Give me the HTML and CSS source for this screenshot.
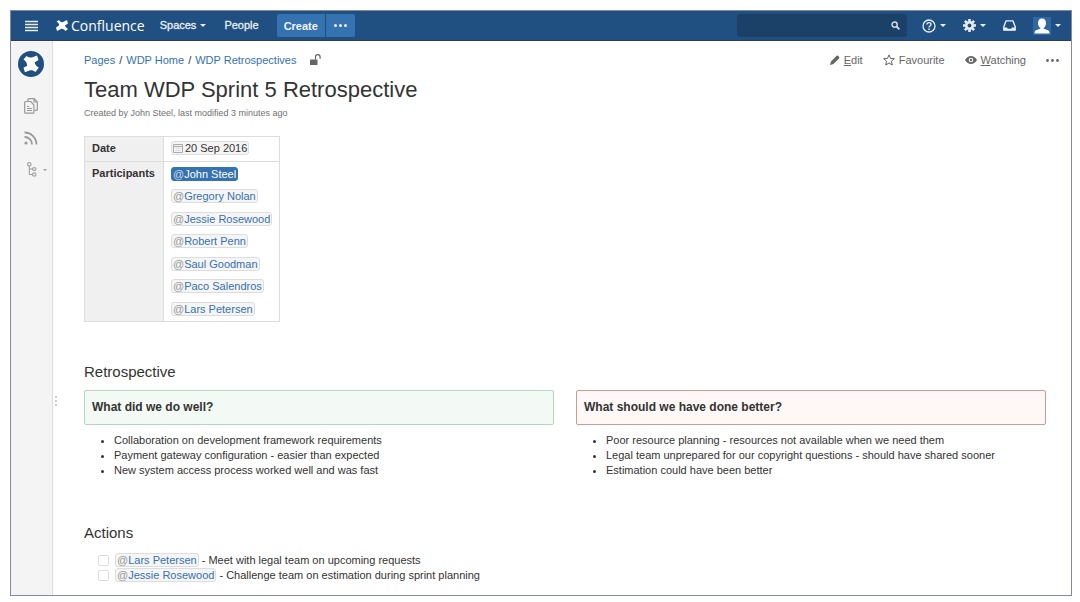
FILE: index.html
```html
<!DOCTYPE html>
<html lang="en">
<head>
    <meta charset="UTF-8">
    <meta name="viewport" content="width=device-width, initial-scale=1.0">
    <title>Team WDP Sprint 5 Retrospective - Confluence</title>

    <link rel="stylesheet" href="styles.css">
</head>
<body>
    <div class="app">
        <!-- top bar -->
        <header class="header">
            <button type="button" class="icon-btn menu-btn" aria-label="Menu">
                <svg width="13" height="12" viewBox="0 0 13 12"><path d="M0 1.5h13M0 4.5h13M0 7.5h13M0 10.5h13" stroke="currentColor" stroke-width="1.3"/></svg>
            </button>
            <a href="#" class="logo">
                <svg width="12" height="11" viewBox="0 0 24 22" fill="currentColor"><path d="M1 3 6 0c3 4 5 5 8 4l8-4 2 7-6 4c1 3 2 4 6 7l-5 4c-4-4-6-5-9-4l-8 4-2-7 6-4C7 8 5 6 1 3z"/></svg>
                <span>Confluence</span>
            </a>
            <nav class="main-nav">
                <a href="#">Spaces <span class="caret"></span></a>
                <a href="#">People</a>
            </nav>
            <div class="create-group">
                <button type="button" class="create-btn">Create</button>
                <button type="button" class="create-btn more-btn" aria-label="Create from template">
                    <svg width="13" height="3" viewBox="0 0 13 3" fill="currentColor"><circle cx="1.5" cy="1.5" r="1.5"/><circle cx="6.5" cy="1.5" r="1.5"/><circle cx="11.5" cy="1.5" r="1.5"/></svg>
                </button>
            </div>
            <form class="search" role="search">
                <input type="text" class="search-input" aria-label="Search">
                <svg width="9" height="9" viewBox="0 0 9 9" fill="none" stroke="currentColor" stroke-width="1.4"><circle cx="3.6" cy="3.6" r="2.6"/><path d="M5.6 5.6 8.4 8.4" stroke-width="1.8"/></svg>
            </form>
            <div class="tools">
                <button type="button" class="icon-btn" aria-label="Help">
                    <svg width="14" height="14" viewBox="0 0 14 14" fill="none" stroke="currentColor"><circle cx="7" cy="7" r="6" stroke-width="1.3"/><path d="M5 5.6c0-2.6 4-2.6 4-.2C9 7 7 6.9 7 8.6" stroke-width="1.4"/><path d="M7 9.6v1.5" stroke-width="1.5"/></svg>
                    <span class="caret"></span>
                </button>
                <button type="button" class="icon-btn" aria-label="Settings">
                    <svg width="13" height="13" viewBox="0 0 13 13" fill="none" stroke="currentColor"><circle cx="6.5" cy="6.5" r="3.3" stroke-width="2.6"/><path d="M6.5 0v2.4M6.5 10.6V13M0 6.5h2.4M10.6 6.5H13M1.9 1.9l1.7 1.7M9.4 9.4l1.7 1.7M11.1 1.9 9.4 3.6M3.6 9.4l-1.7 1.7" stroke-width="2.6"/></svg>
                    <span class="caret"></span>
                </button>
                <button type="button" class="icon-btn" aria-label="Notifications">
                    <svg width="13" height="11" viewBox="0 0 13 11" fill="none" stroke="currentColor" stroke-width="1.4"><path d="M3 .9h7l2.2 5.8v3.4H.8V6.7z" stroke-linejoin="round"/><path d="M.8 7.4h3.1l.9 1.4h3.4l.9-1.4h3.1v2.9H.8z" fill="currentColor" stroke="none"/></svg>
                </button>
                <button type="button" class="icon-btn" aria-label="Profile">
                    <svg width="18" height="18" viewBox="0 0 18 18"><path fill="#2f68a2" d="M0 0h18v18H0z"/><path fill="#fff" d="M9 1.5c2.7 0 4 1.9 4 4.4 0 2.2-.9 4.2-2.3 5.1v.8l4.3 1.4c1.2.4 1.5 1.6 1.5 3.3h-15c0-1.7.3-2.9 1.500-3.300l4.300-1.400V11C5.900 10.100 5 8.100 5 5.900 5 3.400 6.300 1.500 9 1.500z"/></svg>
                    <span class="caret"></span>
                </button>
            </div>
        </header>

        <div class="body">
            <!-- sidebar -->
            <aside class="sidebar">
                <a href="#" class="space-logo" aria-label="Space home">
                    <svg width="26" height="26" viewBox="0 0 26 26"><circle cx="13" cy="13" r="13" fill="#205081"/><path fill="#fff" d="M5.500 8.500l3-3.500c2 1.500 4 2 6 1.200L19 4.500l1.500 4.500-3.700 2.200c.2 2.400 1.300 3.800 4 5.300L17.500 21c-2-1.700-4.200-2.300-6-1.500l-4.600 1.800-1.400-4.500 3.700-2.100C9 12 8 10.200 5.500 8.500z"/></svg>
                </a>
                <a href="#" class="side-link" aria-label="Pages">
                    <svg width="14" height="16" viewBox="0 0 14 16" fill="none" stroke="currentColor" stroke-width="1.2"><path d="M4 3V1.500c0-.5.3-.8.8-.8h5.400L13.300 4v7.500c0 .6-.3.9-.8.9H10.500M10 .7V4h3.300"/><path d="M1.500 3.500h5.300L9.900 7v7.300c0 .6-.3.9-.8.9H1.500c-.5 0-.8-.3-.8-.9V4.400c0-.6.3-.9.8-.9z"/><path d="M3 8.500h2M3 10.500h5M3 12.500h5"/></svg>
                </a>
                <a href="#" class="side-link" aria-label="Blog">
                    <svg width="14" height="14" viewBox="0 0 14 14" fill="none" stroke="currentColor" stroke-width="1.8"><circle cx="2" cy="12" r="1.6" fill="currentColor" stroke="none"/><path d="M.5 6A7.300 7.300 0 0 1 8 13.500M.5 1.500A12 12 0 0 1 12.500 13.500"/></svg>
                </a>
                <a href="#" class="side-link tree-link" aria-label="Page tree">
                    <svg width="10" height="15" viewBox="0 0 10 15" fill="none" stroke="currentColor"><path d="M.8.8h3v3h-3zM5.800 5.800h3v2.500h-3zM5.800 11h3v3h-3zM2.300 3.800v8.700h3.500M2.300 7h3.500"/></svg>
                    <span class="caret"></span>
                </a>
            </aside>
            <div class="resize-handle"><i></i><i></i><i></i></div>

            <!-- page -->
            <main class="content">
                <div class="page-top">
                    <nav class="breadcrumbs">
                        <a href="#">Pages</a><span class="sep">/</span><a href="#">WDP Home</a><span class="sep">/</span><a href="#">WDP Retrospectives</a>
                        <svg class="lock" width="11" height="12" viewBox="0 0 11 12"><path fill="#666" d="M0 5.500h7.500V11H0z"/><path fill="none" stroke="#666" stroke-width="1.2" d="M5.500 5.500V3.200c0-3.400 4.600-3.400 4.600 0v1.600"/></svg>
                    </nav>
                    <div class="actions">
                        <a href="#">
                            <svg width="10" height="10" viewBox="0 0 10 10" fill="currentColor"><path d="M0 10l1-3.500L6.700.8c.9-.9 3.400 1.600 2.500 2.500L3.500 9z"/></svg>
                            <span><u>E</u>dit</span>
                        </a>
                        <a href="#">
                            <svg width="12" height="12" viewBox="0 0 12 12" fill="none" stroke="currentColor"><path d="M6 .9l1.500 3.500 3.900.3-3 2.500.9 3.800L6 9l-3.300 2 .9-3.800-3-2.500 3.900-.3z"/></svg>
                            <span>Favourite</span>
                        </a>
                        <a href="#">
                            <svg width="12" height="8" viewBox="0 0 12 8"><path fill="currentColor" fill-rule="evenodd" d="M0 4c3-5.300 9-5.300 12 0-3 5.300-9 5.300-12 0zm6-2.300a2.300 2.300 0 1 0 0 4.600 2.300 2.300 0 0 0 0-4.600z"/><circle cx="6" cy="4" r="1.2" fill="currentColor"/></svg>
                            <span><u>W</u>atching</span>
                        </a>
                        <button type="button" class="icon-btn" aria-label="More actions">
                            <svg width="13" height="3" viewBox="0 0 13 3" fill="currentColor"><circle cx="1.5" cy="1.5" r="1.4"/><circle cx="6.5" cy="1.5" r="1.4"/><circle cx="11.5" cy="1.5" r="1.4"/></svg>
                        </button>
                    </div>
                </div>

                <h1>Team WDP Sprint 5 Retrospective</h1>
                <p class="meta">Created by John Steel, last modified 3 minutes ago</p>

                <table class="info">
                    <tr>
                        <th scope="row">Date</th>
                        <td>
                            <time class="tag date" datetime="2016-09-20"><svg width="10" height="9" viewBox="0 0 10 9" fill="none" stroke="#aaa"><path d="M.5.5h9v8h-9zM.5 2.500h9"/><path d="M2.500 4.500h5M2.500 6.500h5" stroke="#ddd"/></svg>20 Sep 2016</time>
                        </td>
                    </tr>
                    <tr>
                        <th scope="row">Participants</th>
                        <td>
                            <div class="people">
                                <a href="#" class="tag me"><span class="at">@</span>John Steel</a>
                                <a href="#" class="tag"><span class="at">@</span>Gregory Nolan</a>
                                <a href="#" class="tag"><span class="at">@</span>Jessie Rosewood</a>
                                <a href="#" class="tag"><span class="at">@</span>Robert Penn</a>
                                <a href="#" class="tag"><span class="at">@</span>Saul Goodman</a>
                                <a href="#" class="tag"><span class="at">@</span>Paco Salendros</a>
                                <a href="#" class="tag"><span class="at">@</span>Lars Petersen</a>
                            </div>
                        </td>
                    </tr>
                </table>

                <h2>Retrospective</h2>
                <div class="columns">
                    <section>
                        <h3 class="panel good">What did we do well?</h3>
                        <ul>
                            <li>Collaboration on development framework requirements</li>
                            <li>Payment gateway configuration - easier than expected</li>
                            <li>New system access process worked well and was fast</li>
                        </ul>
                    </section>
                    <section>
                        <h3 class="panel bad">What should we have done better?</h3>
                        <ul>
                            <li>Poor resource planning - resources not available when we need them</li>
                            <li>Legal team unprepared for our copyright questions - should have shared sooner</li>
                            <li>Estimation could have been better</li>
                        </ul>
                    </section>
                </div>

                <h2>Actions</h2>
                <div class="tasks">
                    <div class="task">
                        <input type="checkbox" id="task1">
                        <label for="task1"><a href="#" class="tag"><span class="at">@</span>Lars Petersen</a> - Meet with legal team on upcoming requests</label>
                    </div>
                    <div class="task">
                        <input type="checkbox" id="task2">
                        <label for="task2"><a href="#" class="tag"><span class="at">@</span>Jessie Rosewood</a> - Challenge team on estimation during sprint planning</label>
                    </div>
                </div>
            </main>
        </div>
    </div>
</body>
</html>
```
FILE: styles.css
```css
* {
    box-sizing: border-box;
}

body {
    margin: 0;
    padding: 10px 8px 6px 10px;
    background: #fff;
    color: #333;
    font-family: "Liberation Sans", Arial, sans-serif;
    font-size: 11px;
    line-height: 15px;
}

a {
    color: #3572b0;
    text-decoration: none;
}

svg {
    display: block;
    flex: none;
}

button {
    font-family: inherit;
    font-size: 11px;
    border: none;
    cursor: pointer;
}

.app {
    display: flex;
    flex-direction: column;
    min-height: calc(100vh - 16px);
    border: 1px solid #8289a0;
}

/* header */
.header {
    display: flex;
    align-items: center;
    height: 30px;
    padding: 0 10px 0 14px;
    background: #205081;
    border-bottom: 1px solid #2e3d54;
    color: #e8eef5;
}

.icon-btn {
    display: flex;
    align-items: center;
    gap: 4px;
    padding: 0;
    background: none;
    color: inherit;
}

.caret {
    display: inline-block;
    border: 3px solid transparent;
    border-top-color: currentColor;
    border-bottom: none;
}

.logo {
    display: flex;
    align-items: center;
    gap: 3px;
    margin-left: 18px;
    color: #fff;
    font-family: "Open Sans", sans-serif;
    font-size: 14px;
}

.main-nav {
    display: flex;
    gap: 18px;
    margin-left: 15px;
    -webkit-text-stroke: 0.3px;
}

.main-nav a {
    display: flex;
    align-items: center;
    gap: 4px;
    color: #e8eef5;
}

.create-group {
    display: flex;
    gap: 1px;
    margin-left: 18px;
}

.create-btn {
    height: 23px;
    padding: 0 7px;
    background: #3572b0;
    border-radius: 2px 0 0 2px;
    color: #f0f5fa;
    font-weight: bold;
}

.more-btn {
    padding: 0 8px;
    border-radius: 0 2px 2px 0;
}

.search {
    display: flex;
    align-items: center;
    width: 170px;
    height: 23px;
    margin-left: auto;
    padding-right: 7px;
    background: #1c4168;
    border-radius: 3px;
    color: #d5dfea;
}

.search-input {
    flex: 1;
    min-width: 0;
    padding: 0 8px;
    border: none;
    outline: none;
    background: none;
    color: #fff;
    font-size: 11px;
}

.tools {
    display: flex;
    align-items: center;
    gap: 17px;
    margin-left: 15px;
}

/* sidebar */
.body {
    display: flex;
    flex: 1;
}

.sidebar {
    display: flex;
    flex-direction: column;
    align-items: center;
    width: 42px;
    padding: 10px 2px 0 0;
    background: #f4f4f4;
    border-right: 1px solid #ddd;
}

.side-link {
    margin-top: 17px;
    color: #999;
}

.space-logo + .side-link {
    margin-top: 21px;
}

.tree-link {
    display: flex;
    align-items: center;
    gap: 6px;
    margin-left: 12px;
}

.tree-link .caret {
    border-width: 2px;
    border-bottom: none;
}

.resize-handle {
    display: flex;
    flex-direction: column;
    justify-content: center;
    gap: 2px;
    width: 7px;
    padding: 166px 0 0 2px;
}

.resize-handle i {
    width: 2px;
    height: 2px;
    background: #ccc;
}

/* page */
.content {
    flex: 1;
    min-width: 0;
    padding: 11px 25px 10px 24px;
}

.page-top {
    display: flex;
    justify-content: space-between;
    align-items: center;
    height: 16px;
    margin-right: -13px;
}

.breadcrumbs {
    display: flex;
    align-items: center;
}

.sep {
    margin: 0 4px;
}

.lock {
    margin-left: 14px;
}

.actions {
    display: flex;
    align-items: center;
    gap: 20px;
    color: #666;
}

.actions a {
    display: flex;
    align-items: center;
    gap: 4px;
    color: #666;
}

h1 {
    margin: 9px 0 0;
    font-size: 22px;
    font-weight: normal;
    line-height: 26px;
}

.meta {
    margin: 3px 0 15px;
    color: #707070;
    font-size: 9px;
}

.info {
    border-collapse: collapse;
}

.info th,
.info td {
    padding: 4px 7px;
    border: 1px solid #ddd;
    text-align: left;
    vertical-align: top;
}

.info th {
    padding-right: 8px;
    background: #f0f0f0;
}

.people {
    display: flex;
    flex-direction: column;
    align-items: flex-start;
    justify-content: space-between;
    min-height: 151px;
    padding: 1px 0;
}

.tag {
    display: inline-block;
    padding: 0 1px;
    background: #f5f5f5;
    border: 1px solid #ddd;
    border-radius: 3px;
    line-height: 12px;
}

.date {
    display: inline-flex;
    align-items: center;
    gap: 2px;
}

.at {
    color: #999;
}

.me {
    background: #3572b0;
    border-color: #3572b0;
    color: #fff;
}

.me .at {
    color: #c5d8ea;
}

h2 {
    margin: 40px 0 8px;
    font-size: 15px;
    font-weight: normal;
    line-height: 20px;
}

.columns {
    display: grid;
    grid-template-columns: 1fr 1fr;
    gap: 22px;
}

.panel {
    margin: 0;
    padding: 8px 7px;
    border: 1px solid;
    border-radius: 2px;
    font-size: 12px;
    line-height: 17px;
}

.good {
    background: #f3f9f4;
    border-color: #b5d5bf;
}

.bad {
    background: #fff8f7;
    border-color: #d09a98;
}

ul {
    margin: 8px 0 0;
    padding-left: 30px;
}

.columns + h2 {
    margin-top: 45px;
}

.tasks {
    padding: 2px 0 0 14px;
}

.task {
    display: flex;
    align-items: center;
    height: 15px;
}

.task input {
    appearance: none;
    width: 11px;
    height: 11px;
    margin: 0 6px 0 0;
    border: 1px solid #ddd;
    border-radius: 2px;
    background: #fff;
}
```
